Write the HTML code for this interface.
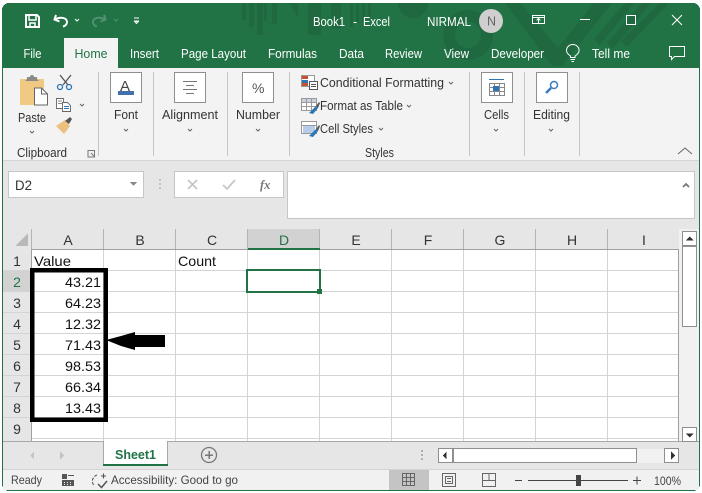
<!DOCTYPE html>
<html><head><meta charset="utf-8"><style>
html,body{margin:0;padding:0;background:#fff;width:702px;height:493px;overflow:hidden}
svg{display:block;position:absolute;left:0;top:0}
text{font-family:"Liberation Sans",sans-serif;font-size:12.5px;fill:#333}
.w{fill:#fff}
.c{font-size:14px;fill:#111}
.h{font-size:14px;fill:#333;text-anchor:middle}
.k{fill:none;stroke:#666;stroke-width:1}
</style></head><body>
<svg width="702" height="493" viewBox="0 0 702 493" shape-rendering="crispEdges">
<rect x="0" y="0" width="702" height="493" fill="#fff"/>
<!-- window -->
<rect x="2" y="3" width="698" height="488" rx="7" fill="#217346"/>
<rect x="3" y="68" width="696" height="422" fill="#e6e6e6"/>
<!-- title decor -->
<g fill="#1f6840" shape-rendering="auto">
<rect x="242" y="3" width="4" height="17"/><rect x="249" y="3" width="5" height="24"/><rect x="257" y="3" width="6" height="32"/><rect x="264" y="3" width="3" height="18"/><rect x="272" y="3" width="5" height="21"/>
<path d="M289 3h9v14z"/><path d="M308 3h13v32h-13z"/><path d="M331 3h10v26h-10z"/>
<rect x="350" y="3" width="3" height="24"/><rect x="356" y="3" width="3" height="20"/><rect x="362" y="3" width="3" height="20"/><rect x="368" y="3" width="3" height="14"/>
<path d="M398 3h30a15 15 0 0 1-30 0z"/>
<path d="M468 10a25 25 0 1 0 .1 0zm0 12a13 13 0 1 1-.1 0z" opacity=".9"/>
<path d="M505 3h15l38 45 36-45h18l-50 63h-10z"/>
<path d="M625 3h9l-34 42-6-6zM642 3h9l-38 46-6-6zM660 3h9l-42 44-6-6z"/>
</g>
<!-- ribbon -->
<rect x="3" y="68" width="696" height="92" fill="#f3f3f3"/>
<rect x="3" y="160" width="696" height="1" fill="#d4d4d4"/>
<rect x="64" y="38" width="54" height="30" fill="#f3f3f3"/>
<!-- QAT -->
<g shape-rendering="auto" fill="none" stroke="#fff" stroke-width="2">
<path d="M26 15h11l2 2v10H26z"/><path d="M29 15v5h7v-5" stroke-width="1.5"/><path d="M30 27v-4h5v4" stroke-width="1.5"/>
<path d="M56 15l-1.500 4.500 5 2M55 19.500c5-3 12-2 12 2.500 0 2.500-2 4-4 4.500"/>
<path d="M75 19l2 2 2-2" stroke-width="1"/>
<g stroke="#4f9171"><path d="M104 15l1.500 4.500-5 2M105 19.500c-5-3-12-2-12 2.500 0 2.500 2 4 4 4.500"/><path d="M114 19l2 2 2-2" stroke-width="1"/></g>
<path d="M134 18h5" stroke-width="1"/><path d="M134 21h5M136.500 23.500l-1.800-2h3.600z" stroke-width="1"/>
</g>
<!-- title -->
<text class="w" x="313" y="26" textLength="32" lengthAdjust="spacingAndGlyphs">Book1</text>
<text class="w" x="353" y="26">-</text>
<text class="w" x="363" y="26" textLength="27" lengthAdjust="spacingAndGlyphs">Excel</text>
<text class="w" x="427" y="26" textLength="44" lengthAdjust="spacingAndGlyphs">NIRMAL</text>
<circle cx="491" cy="21" r="12" fill="#cfcfcf" shape-rendering="auto"/>
<text x="487" y="25.500" style="fill:#666" font-size="12">N</text>
<!-- window controls -->
<g fill="none" stroke="#fff" stroke-width="1">
<rect x="532.500" y="15.500" width="12" height="8"/><path d="M532 17.500h13"/><path d="M538.500 23v-4M536.500 20.500l2-2 2 2" />
<path d="M580 19.500h10"/>
<rect x="626.500" y="15.500" width="9" height="9"/>
<path d="M672 15l10 10M682 15l-10 10" shape-rendering="auto"/>
</g>
<!-- tabs -->
<g class="tabs">
<text class="w" x="23.500" y="58" textLength="18" lengthAdjust="spacingAndGlyphs">File</text>
<text x="74.500" y="58" textLength="33" lengthAdjust="spacingAndGlyphs" style="fill:#217346">Home</text>
<text class="w" x="130" y="58" textLength="29" lengthAdjust="spacingAndGlyphs">Insert</text>
<text class="w" x="181" y="58" textLength="65" lengthAdjust="spacingAndGlyphs">Page Layout</text>
<text class="w" x="268" y="58" textLength="49" lengthAdjust="spacingAndGlyphs">Formulas</text>
<text class="w" x="339" y="58" textLength="25" lengthAdjust="spacingAndGlyphs">Data</text>
<text class="w" x="385" y="58" textLength="37" lengthAdjust="spacingAndGlyphs">Review</text>
<text class="w" x="444" y="58" textLength="25" lengthAdjust="spacingAndGlyphs">View</text>
<text class="w" x="491" y="58" textLength="53" lengthAdjust="spacingAndGlyphs">Developer</text>
<text class="w" x="592" y="58" textLength="38" lengthAdjust="spacingAndGlyphs">Tell me</text>
</g>
<g fill="none" stroke="#fff" stroke-width="1" shape-rendering="auto">
<path d="M570.500 56c-3-2-4-3.500-4-5.500a6.300 6 0 0 1 12.600 0c0 2-1 3.500-4 5.500v1.500h-4.600z"/><path d="M570.500 59.500h4.500M571.500 61.500h2.500"/>
<path d="M669.500 46.500h15v10h-10l-3 3v-3h-2z"/>
</g>
<!-- separators -->
<g fill="#c6c6c6">
<rect x="98" y="72" width="1" height="84"/><rect x="153" y="72" width="1" height="84"/><rect x="227" y="72" width="1" height="84"/><rect x="289" y="72" width="1" height="84"/><rect x="469" y="72" width="1" height="84"/><rect x="524" y="72" width="1" height="84"/><rect x="579" y="72" width="1" height="84"/>
</g>
<!-- clipboard group -->
<g shape-rendering="auto">
<path d="M20 79h24v26H20z" fill="#f0c983"/>
<path d="M27 79v-2h3a2 2 0 0 1 4 0h3v2l2 2H25z" fill="#8a8a8a"/>
<path d="M34.500 88h7l6 6v11h-13z" fill="#fff" stroke="#666" stroke-width="1"/>
<path d="M41.500 88v6h6" fill="none" stroke="#666" stroke-width="1"/>
<g fill="none" stroke-width="1.300"><path d="M60 75l8 10M71 75l-8 10" stroke="#555"/><circle cx="60" cy="87" r="2.500" stroke="#2e75b6"/><circle cx="69" cy="87" r="2.500" stroke="#2e75b6"/></g>
<path d="M56.500 98.500h7v10h-7z" fill="#fff" stroke="#666" stroke-width=".9"/>
<path d="M58 101h4M58 103.500h4" stroke="#666" stroke-width=".8"/>
<path d="M62.500 102.500h5l3 3v6h-8z" fill="#fff" stroke="#666" stroke-width=".9"/>
<path d="M64 106.500h5M64 108.500h5" stroke="#2e75b6" stroke-width=".9"/>
<path d="M56 126l9-6 5 6-6 8z" fill="#edc07e"/><path d="M65 121l5-4 2 2-3 5z" fill="#555"/>
</g>
<path d="M80 104l2 2 2-2M30 131l2 2 2-2M124 129l2 2 2-2M188 129l2 2 2-2M256 129l2 2 2-2M494 129l2 2 2-2M549 129l2 2 2-2M449 82l2 2 2-2M407 105l2 2 2-2M379 128l2 2 2-2" fill="none" stroke="#666" shape-rendering="auto"/>
<path d="M88 150.500h6.500v6.500M88 150v7h7M91 153l4 4" fill="none" stroke="#777" shape-rendering="auto"/>
<text x="18" y="122" textLength="28" lengthAdjust="spacingAndGlyphs">Paste</text>
<text x="17" y="157" textLength="50" lengthAdjust="spacingAndGlyphs">Clipboard</text>
<!-- big buttons -->
<g fill="#fff" stroke="#8f8f8f">
<rect x="110.500" y="72.500" width="31" height="30"/><rect x="174.500" y="72.500" width="31" height="30"/><rect x="242.500" y="72.500" width="31" height="30"/><rect x="481.500" y="72.500" width="31" height="30"/><rect x="536.500" y="72.500" width="31" height="30"/>
</g>
<text x="120" y="91" style="font-size:15px;fill:#444">A</text>
<rect x="118" y="91" width="16" height="4" fill="#4472a8"/>
<path d="M183 81.500h14M186 85.500h8M183 89.500h14M186 93.500h8" stroke="#777" fill="none"/>
<text x="252" y="93" style="font-size:14px;fill:#555">%</text>
<g fill="none" stroke="#888">
<path d="M489.500 83.500h15v12h-15zM489.500 87.500h15M489.500 91.500h15M494.500 83.500v12M499.500 83.500v12"/>
<rect x="493" y="86" width="6" height="5" fill="#2e75b6" stroke="none"/>
<path d="M489 79.500h15" stroke="#2e75b6"/>
</g>
<g fill="none" stroke="#3a7cc0" shape-rendering="auto"><circle cx="554" cy="85" r="3.500" stroke-width="1.500"/><path d="M551 88l-5 5" stroke-width="2.500"/></g>
<text x="114" y="119" textLength="24" lengthAdjust="spacingAndGlyphs">Font</text>
<text x="162" y="119" textLength="56" lengthAdjust="spacingAndGlyphs">Alignment</text>
<text x="236" y="119" textLength="44" lengthAdjust="spacingAndGlyphs">Number</text>
<text x="484" y="119" textLength="25" lengthAdjust="spacingAndGlyphs">Cells</text>
<text x="533" y="119" textLength="37" lengthAdjust="spacingAndGlyphs">Editing</text>
<!-- styles -->
<g fill="none" stroke="#999">
<rect x="301.500" y="75.500" width="13" height="11" fill="#fff"/>
<rect x="302" y="76" width="6" height="3" fill="#c8502e" stroke="none"/><rect x="302" y="83" width="6" height="3" fill="#c8502e" stroke="none"/><rect x="302" y="80" width="6" height="3" fill="#2e75b6" stroke="none"/>
<rect x="309.500" y="81.500" width="8" height="8" fill="#fff" stroke="#555"/><path d="M311 84.500h5M311 86.500h5" stroke="#555"/>
<path d="M301.500 98.500h15v12h-15z" fill="#fff"/><rect x="302" y="99" width="14" height="3" fill="#c9d3de" stroke="none"/>
<path d="M301.500 102.500h15M301.500 106.500h15M306.500 98.500v12M311.500 98.500v12"/>
<path d="M301.500 121.500h15v12h-15z" fill="#fff"/><path d="M301.500 125.500h15"/>
<rect x="303" y="126" width="12" height="7" fill="#b5cde8" stroke="none"/>
</g>
<g shape-rendering="auto"><path d="M309 113l7-7 2 2-5 6zM309 136l7-7 2 2-5 6z" fill="#2e75b6"/><path d="M316 106l3-4 1 1-2 5zM316 129l3-4 1 1-2 5z" fill="#555"/></g>
<text x="320" y="87" textLength="124" lengthAdjust="spacingAndGlyphs">Conditional Formatting</text>
<text x="320" y="110" textLength="83" lengthAdjust="spacingAndGlyphs">Format as Table</text>
<text x="320" y="133" textLength="53" lengthAdjust="spacingAndGlyphs">Cell Styles</text>
<text x="365" y="157" textLength="29" lengthAdjust="spacingAndGlyphs">Styles</text>
<path d="M678 154l7-6 7 6" fill="none" stroke="#666" shape-rendering="auto"/>
<!-- formula bar -->
<rect x="8.500" y="171.500" width="135" height="26" fill="#fff" stroke="#c6c6c6"/>
<text x="15" y="190" textLength="17" lengthAdjust="spacingAndGlyphs" style="font-size:13.500px">D2</text>
<path d="M130 182h7l-3.500 4z" fill="#888"/>
<path d="M159 179h2v2h-2zM159 183h2v2h-2zM159 187h2v2h-2z" fill="#c4c4c4"/>
<rect x="174.500" y="171.500" width="109" height="26" fill="#fff" stroke="#c6c6c6"/>
<g fill="none" stroke="#c6c6c6" stroke-width="1.800" shape-rendering="auto"><path d="M188 180l9 9M197 180l-9 9"/><path d="M223 185l4 4 8-9"/></g>
<text x="260" y="189" style="font-family:'Liberation Serif',serif;font-style:italic;font-weight:bold;font-size:12.500px;fill:#777">fx</text>
<rect x="287.500" y="171.500" width="407" height="47" fill="#fff" stroke="#c6c6c6"/>
<path d="M683 187l3-3 3 3" fill="none" stroke="#777" stroke-width="1.800" shape-rendering="auto"/>
<!-- sheet -->
<rect x="32" y="250" width="647" height="191" fill="#fff"/>
<rect x="3" y="229" width="679" height="20" fill="#e6e6e6"/>
<rect x="3" y="250" width="29" height="191" fill="#e6e6e6"/>
<rect x="248" y="229" width="72" height="19" fill="#d2d2d2"/>
<rect x="3" y="271" width="28" height="20" fill="#d2d2d2"/>
<path d="M28 246V233L15 246z" fill="#b9b9b9"/>
<!-- grid -->
<g fill="#d4d4d4">
<rect x="32" y="270" width="647" height="1"/><rect x="32" y="291" width="647" height="1"/><rect x="32" y="312" width="647" height="1"/><rect x="32" y="333" width="647" height="1"/><rect x="32" y="354" width="647" height="1"/><rect x="32" y="375" width="647" height="1"/><rect x="32" y="396" width="647" height="1"/><rect x="32" y="417" width="647" height="1"/><rect x="32" y="438" width="647" height="1"/>
<rect x="103" y="250" width="1" height="191"/><rect x="175" y="250" width="1" height="191"/><rect x="247" y="250" width="1" height="191"/><rect x="319" y="250" width="1" height="191"/><rect x="391" y="250" width="1" height="191"/><rect x="463" y="250" width="1" height="191"/><rect x="535" y="250" width="1" height="191"/><rect x="607" y="250" width="1" height="191"/>
<rect x="3" y="270" width="29" height="1"/><rect x="3" y="291" width="29" height="1"/><rect x="3" y="312" width="29" height="1"/><rect x="3" y="333" width="29" height="1"/><rect x="3" y="354" width="29" height="1"/><rect x="3" y="375" width="29" height="1"/><rect x="3" y="396" width="29" height="1"/><rect x="3" y="417" width="29" height="1"/>
</g>
<rect x="31" y="249" width="1" height="192" fill="#a0a0a0"/>
<rect x="32" y="249" width="647" height="1" fill="#a0a0a0"/>
<rect x="678" y="249" width="1" height="192" fill="#a0a0a0"/>
<rect x="3" y="441" width="696" height="1" fill="#a8a8a8"/>
<g fill="#b4b4b4"><rect x="103" y="229" width="1" height="20"/><rect x="175" y="229" width="1" height="20"/><rect x="247" y="229" width="1" height="20"/><rect x="319" y="229" width="1" height="20"/><rect x="391" y="229" width="1" height="20"/><rect x="463" y="229" width="1" height="20"/><rect x="535" y="229" width="1" height="20"/><rect x="607" y="229" width="1" height="20"/><rect x="31" y="229" width="1" height="20"/></g>
<rect x="248" y="248" width="72" height="2" fill="#217346"/>
<!-- headers -->
<text class="h" x="68" y="245">A</text><text class="h" x="140" y="245">B</text><text class="h" x="212" y="245">C</text><text class="h" x="284" y="245" style="fill:#217346">D</text><text class="h" x="356" y="245">E</text><text class="h" x="428" y="245">F</text><text class="h" x="500" y="245">G</text><text class="h" x="572" y="245">H</text><text class="h" x="644" y="245">I</text>
<text class="h" x="17" y="266">1</text><text class="h" x="17" y="287" style="fill:#217346">2</text><text class="h" x="17" y="308">3</text><text class="h" x="17" y="329">4</text><text class="h" x="17" y="350">5</text><text class="h" x="17" y="371">6</text><text class="h" x="17" y="392">7</text><text class="h" x="17" y="413">8</text><text class="h" x="17" y="434">9</text>
<!-- cells -->
<text class="c" x="34" y="266" textLength="37" lengthAdjust="spacingAndGlyphs">Value</text>
<text class="c" x="178" y="266" textLength="38" lengthAdjust="spacingAndGlyphs">Count</text>
<text class="c" x="65" y="287" textLength="36" lengthAdjust="spacingAndGlyphs">43.21</text>
<text class="c" x="65" y="308" textLength="36" lengthAdjust="spacingAndGlyphs">64.23</text>
<text class="c" x="65" y="329" textLength="36" lengthAdjust="spacingAndGlyphs">12.32</text>
<text class="c" x="65" y="350" textLength="36" lengthAdjust="spacingAndGlyphs">71.43</text>
<text class="c" x="65" y="371" textLength="36" lengthAdjust="spacingAndGlyphs">98.53</text>
<text class="c" x="65" y="392" textLength="36" lengthAdjust="spacingAndGlyphs">66.34</text>
<text class="c" x="65" y="413" textLength="36" lengthAdjust="spacingAndGlyphs">13.43</text>
<!-- selection -->
<rect x="247" y="270" width="73" height="22" fill="none" stroke="#217346" stroke-width="2"/>
<rect x="317" y="289" width="5" height="5" fill="#217346"/>
<!-- annotation -->
<rect x="32.250" y="270.250" width="73.500" height="149.500" fill="none" stroke="#000" stroke-width="4.500"/>
<path d="M106 340l15-4 14-4v3h30v12h-30v3l-14-4z" fill="#000" shape-rendering="auto"/>
<!-- scrollbar -->
<rect x="679" y="229" width="20" height="212" fill="#f1f1f1"/>
<rect x="682.500" y="231.500" width="14" height="14" fill="#fff" stroke="#8f8f8f"/>
<path d="M685.500 240.500h8l-4-4z" fill="#333"/>
<rect x="682.500" y="246.500" width="14" height="80" fill="#fff" stroke="#8f8f8f"/>
<rect x="682.500" y="427.500" width="14" height="14" fill="#fff" stroke="#8f8f8f"/>
<path d="M685.500 433.500h8l-4 4z" fill="#333"/>
<!-- tabs row -->
<rect x="3" y="442" width="696" height="28" fill="#e6e6e6"/>
<rect x="103" y="441" width="64" height="25" fill="#fff"/>
<path d="M103.500 441v25M167.500 441v25" stroke="#a8a8a8" fill="none"/>
<rect x="103" y="464" width="65" height="2" fill="#217346"/>
<text x="115" y="459" textLength="41" lengthAdjust="spacingAndGlyphs" style="font-weight:bold;font-size:13px;fill:#217346">Sheet1</text>
<path d="M34 451.500v8l-4-4zM60 451.500v8l4-4z" fill="#c4c4c4"/>
<circle cx="209" cy="455" r="7.500" fill="none" stroke="#777" stroke-width="1.300" shape-rendering="auto"/>
<path d="M205 455h8M209 451v8" stroke="#777" stroke-width="1.500"/>
<path d="M421 450h2v2h-2zM421 454h2v2h-2zM421 458h2v2h-2z" fill="#b0b0b0"/>
<rect x="438.500" y="448.500" width="14" height="14" fill="#fff" stroke="#8f8f8f"/>
<path d="M442.500 455.500l4-4v8z" fill="#333"/>
<rect x="453.500" y="448.500" width="183" height="14" fill="#fff" stroke="#8f8f8f"/>
<rect x="637" y="449" width="27" height="14" fill="#f1f1f1"/>
<rect x="664.500" y="448.500" width="14" height="14" fill="#fff" stroke="#8f8f8f"/>
<path d="M671 451.500l4 4-4 4z" fill="#333"/>
<!-- status bar -->
<rect x="3" y="470" width="696" height="20" fill="#f1f1f1"/>
<rect x="3" y="469" width="696" height="1" fill="#d4d4d4"/>
<text x="11" y="484" textLength="31" lengthAdjust="spacingAndGlyphs" style="font-size:12px;fill:#444">Ready</text>
<g fill="#555"><rect x="62" y="474" width="5" height="5"/><path d="M68 475h6v1h-6zM62 480h12v6H62z"/></g>
<g fill="#f1f1f1"><rect x="64" y="482" width="1" height="1"/><rect x="67" y="482" width="1" height="1"/><rect x="70" y="482" width="1" height="1"/><rect x="64" y="484" width="1" height="1"/><rect x="67" y="484" width="1" height="1"/><rect x="70" y="484" width="1" height="1"/></g>
<g fill="none" stroke="#555" stroke-width="1.100" shape-rendering="auto"><path d="M97 475a6.500 6.500 0 0 0-3 10.500" stroke-dasharray="3 1.500"/><path d="M101 476h5M103.500 473.500v5"/><path d="M98 484l3.500 3.500 5.500-6.500" stroke-width="1.500"/></g>
<text x="111" y="484" textLength="127" lengthAdjust="spacingAndGlyphs" style="font-size:12px;fill:#444">Accessibility: Good to go</text>
<rect x="389" y="470" width="40" height="20" fill="#c4c4c4"/>
<path d="M402.500 473.500h12v12h-12zM402.500 477.500h12M402.500 481.500h12M406.500 473.500v12M410.500 473.500v12" fill="none" stroke="#666"/>
<path d="M442.500 473.500h13v13h-13zM445.500 476.500h7v7h-7zM447 478.500h4M447 481.500h4" fill="none" stroke="#666"/>
<path d="M482.500 473.500h13v13h-13zM482.500 480.500h6.500v-7M489 480.500h6.500" fill="none" stroke="#666"/>
<rect x="515" y="480" width="7" height="1" fill="#444"/>
<rect x="528" y="480" width="100" height="1" fill="#444"/>
<rect x="576" y="475" width="5" height="11" fill="#444"/>
<path d="M633 480.500h8M637 476.500v8" stroke="#444" fill="none"/>
<text x="654" y="485" textLength="27" lengthAdjust="spacingAndGlyphs" style="font-size:12px;fill:#444">100%</text>
</svg>
</body></html>
